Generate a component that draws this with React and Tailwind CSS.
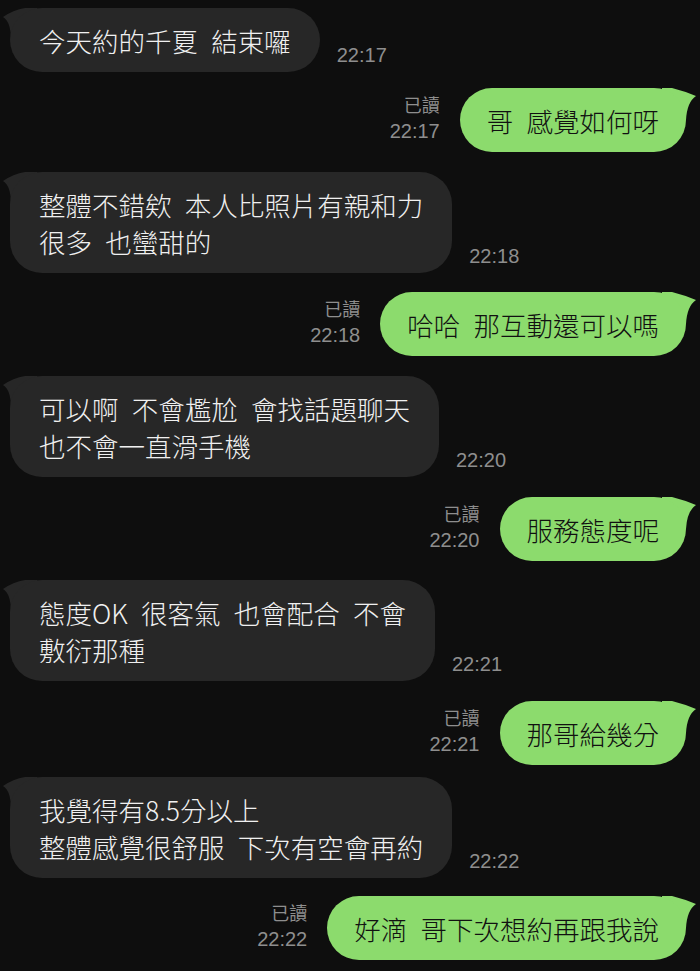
import React from 'react';

const messages = [
  { side: 'left', lines: ['今天約的千夏\u2002結束囉'], time: '22:17', mt: 'mt-[8px]' },
  { side: 'right', lines: ['哥\u2002感覺如何呀'], time: '22:17', mt: 'mt-[16px]' },
  { side: 'left', lines: ['整體不錯欸\u2002本人比照片有親和力', '很多\u2002也蠻甜的'], time: '22:18', mt: 'mt-[20px]' },
  { side: 'right', lines: ['哈哈\u2002那互動還可以嗎'], time: '22:18', mt: 'mt-[19px]' },
  { side: 'left', lines: ['可以啊\u2002不會尷尬\u2002會找話題聊天', '也不會一直滑手機'], time: '22:20', mt: 'mt-[20px]' },
  { side: 'right', lines: ['服務態度呢'], time: '22:20', mt: 'mt-[20px]' },
  { side: 'left', lines: ['態度OK\u2002很客氣\u2002也會配合\u2002不會', '敷衍那種'], time: '22:21', mt: 'mt-[19px]' },
  { side: 'right', lines: ['那哥給幾分'], time: '22:21', mt: 'mt-[20px]' },
  { side: 'left', lines: ['我覺得有8.5分以上', '整體感覺很舒服\u2002下次有空會再約'], time: '22:22', mt: 'mt-[12px]' },
  { side: 'right', lines: ['好滴\u2002哥下次想約再跟我說'], time: '22:22', mt: 'mt-[18px]' },
];

const LeftTail = () => (
  <svg className="absolute left-[-7px] top-0" width="34" height="32" viewBox="0 0 34 32">
    <path d="M34 0 L22 0 Q10 2 0 9 Q8 14 8 32 L34 32 Z" fill="#272727" />
  </svg>
);

const RightTail = () => (
  <svg className="absolute right-[-10px] top-0" width="34" height="32" viewBox="0 0 34 32">
    <path d="M0 0 L10 0 Q22 3 34 8 Q25 14 24 32 L0 32 Z" fill="#8cdb6d" />
  </svg>
);

const LeftMessage = ({ msg }) => (
  <div className={`flex items-end pl-[10px] ${msg.mt}`}>
    <div className="relative">
      <LeftTail />
      <div className="relative bg-[#272727] rounded-[32px] px-[29px] py-[13.5px] text-[26.5px] leading-[37px] font-light text-[#f0f0f0]">
        {msg.lines.map((line, i) => (
          <div key={i} className="whitespace-nowrap">{line}</div>
        ))}
      </div>
    </div>
    <span className="ml-[17px] mb-[5px] text-[20px] leading-[24px] text-[#8e8e8e] font-['Liberation_Sans',sans-serif]">
      {msg.time}
    </span>
  </div>
);

const RightMessage = ({ msg }) => (
  <div className={`flex items-end justify-end pr-[14px] ${msg.mt}`}>
    <div className="mr-[20px] mb-[7px] flex flex-col items-end text-[#8e8e8e]">
      <span className="text-[18px] leading-[27px]">已讀</span>
      <span className="text-[20px] leading-[27px] font-['Liberation_Sans',sans-serif]">{msg.time}</span>
    </div>
    <div className="relative">
      <RightTail />
      <div className="relative bg-[#8cdb6d] rounded-[32px] px-[27px] py-[13.5px] text-[26.5px] leading-[37px] font-light text-[#111111]">
        {msg.lines.map((line, i) => (
          <div key={i} className="whitespace-nowrap">{line}</div>
        ))}
      </div>
    </div>
  </div>
);

export default function App() {
  return (
    <div className="w-[700px] h-[971px] overflow-hidden bg-[#0e0e0e] font-['Noto_Sans_CJK_TC',sans-serif]">
      {messages.map((msg, i) =>
        msg.side === 'left' ? <LeftMessage key={i} msg={msg} /> : <RightMessage key={i} msg={msg} />
      )}
    </div>
  );
}
